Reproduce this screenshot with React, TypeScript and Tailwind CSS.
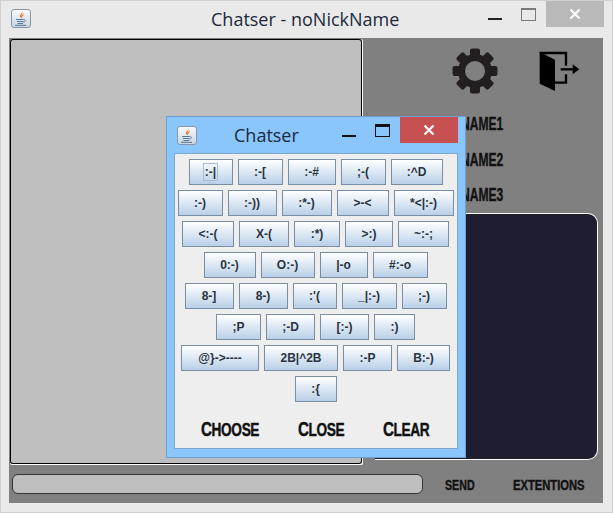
const rows = [
  [[":-|", 44], [":-[", 45], [":-#", 48], [";-(", 45], [":^D", 52]],
  [[":-)", 45], [":-))", 49], [":*-)", 50], [">-<", 52], ["*<|:-)", 60]],
  [["<:-(", 52], ["X-(", 50], [":*)", 46], [">:)", 48], ["~:-;", 51]],
  [["0:-)", 52], ["O:-)", 54], ["|-o", 48], ["#:-o", 55]],
  [["8-]", 49], ["8-)", 49], [":'(", 44], ["_|:-)", 55], [";-)", 45]],
  [[";P", 45], [";-D", 49], ["[:-)", 49], [":)", 41]],
  [["@}->----", 78], ["2B|^2B", 74], [":-P", 49], ["B:-)", 53]],
  [[":{", 42]],
] as [string, number][][];

const display = "font-['Liberation_Sans',sans-serif] font-bold uppercase text-[#111] [-webkit-text-stroke:0.4px_#111]";

function JavaIcon() {
  return (
    <svg width="20" height="19" viewBox="0 0 20 19" className="shrink-0">
      <defs>
        <linearGradient id="javaBg" x1="0" y1="0" x2="0" y2="1">
          <stop offset="0" stopColor="#fbfbfb" />
          <stop offset="1" stopColor="#c8d4e0" />
        </linearGradient>
      </defs>
      <rect x="0.5" y="0.5" width="19" height="18" rx="2.5" fill="url(#javaBg)" stroke="#8496a8" />
      <path d="M11.500 1.800c1 2.400-3.700 3.600-2.300 6.300.3.600.8 1 1.300 1.500-.6-1.600 3.500-2.900 1.600-5.300.2 1.200-1.100 1.700-1.500 2.600-.6-1.500 1.900-2.800.9-5.100z" fill="#e5762a" />
      <path d="M5 10.500h7.500M6 12.500h6.500M6.500 14.500h5.500" stroke="#557799" strokeWidth="1.100" fill="none" />
      <path d="M12.500 10.500c2.500-.5 2.500 2.500 0 2.800" stroke="#557799" strokeWidth="0.900" fill="none" />
      <path d="M4 16.300h11" stroke="#557799" strokeWidth="1" />
    </svg>
  );
}

function GearIcon() {
  return (
    <svg width="46" height="46" viewBox="-23 -23 46 46">
      {[0, 45, 90, 135, 180, 225, 270, 315].map((angle) => (
        <rect key={angle} x="-5" y="-22.500" width="10" height="10" rx="2" fill="#231f20" transform={`rotate(${angle})`} />
      ))}
      <circle r="13.500" fill="none" stroke="#231f20" strokeWidth="7" />
    </svg>
  );
}

function DoorIcon() {
  return (
    <svg width="41" height="40" viewBox="697 152 123 120">
      <path d="M699 155L745 178V272L699 250Z" fill="#000" />
      <path d="M699 158H778V196M778 222V247H745" fill="none" stroke="#000" strokeWidth="7" />
      <path d="M762 207H800" stroke="#000" strokeWidth="7" />
      <path d="M798 192L818 207L798 222Z" fill="#000" />
    </svg>
  );
}

function EmoteButton({ label, width, focused }: { label: string; width: number; focused?: boolean }) {
  return (
    <button
      type="button"
      style={{ width }}
      className="flex h-[26px] shrink-0 items-center justify-center border border-[#7a8ea3] bg-gradient-to-b from-white to-[#b9d0e8] font-['Liberation_Sans',sans-serif] text-[12px] font-bold text-[#2a3340]"
    >
      <span className={focused ? "flex h-[18px] items-center border border-[#a9bdd2] px-px" : ""}>{label}</span>
    </button>
  );
}

function BigFirst({ first, rest }: { first: string; rest: string }) {
  return (
    <span className="inline-block origin-left scale-x-[0.76] tracking-[-0.5px]">
      <span className="text-[20px]">{first}</span>
      <span className="text-[18px]">{rest}</span>
    </span>
  );
}

function EmoteDialog() {
  return (
    <div className="absolute left-[165px] top-[115px] flex h-[342px] w-[300px] flex-col border border-[#6f9fcf] bg-[#8ac5fb]">
      <div className="relative flex h-[36px] items-start">
        <div className="ml-[10px] mt-[9px]">
          <JavaIcon />
        </div>
        <span className="ml-[37px] mt-[6px] font-['Open_Sans',sans-serif] text-[18px] leading-[25px] text-[#1c2a3c]">Chatser</span>
        <div className="absolute left-[175px] top-[18px] h-[2px] w-[14px] bg-[#111]" />
        <div className="absolute left-[208px] top-[7px] h-[13px] w-[15px] border border-t-[3px] border-[#111]" />
        <div className="absolute left-[233px] top-0 flex h-[26px] w-[58px] items-center justify-center bg-[#c75050]">
          <svg width="12" height="12" viewBox="0 0 12 12">
            <path d="M1.500 1.500L10.500 10.500M10.500 1.500L1.500 10.500" stroke="#fff" strokeWidth="2.200" />
          </svg>
        </div>
      </div>
      <div className="ml-[7px] flex h-[296px] w-[284px] flex-col gap-[5px] border border-[#7ea5cb] bg-[#eeeeee] pr-px pt-[5px]">
        {rows.map((row, i) => (
          <div key={i} className="flex justify-center gap-[5px]">
            {row.map(([label, width], j) => (
              <EmoteButton key={label} label={label} width={width} focused={i === 0 && j === 0} />
            ))}
          </div>
        ))}
        <div className={`mt-[10px] flex pl-[26px] leading-[24px] ${display}`}>
          <span className="w-[97px]">
            <BigFirst first="C" rest="hoose" />
          </span>
          <span className="w-[85px]">
            <BigFirst first="C" rest="lose" />
          </span>
          <BigFirst first="C" rest="lear" />
        </div>
      </div>
    </div>
  );
}

export default function App() {
  return (
    <div className="relative h-[513px] w-[613px] overflow-hidden border border-[#d0d0d0] bg-[#e9e9e9]">
      <div className="relative flex h-[37px] items-start">
        <div className="ml-[10px] mt-[8px]">
          <JavaIcon />
        </div>
        <span className="ml-[180px] mt-[6px] font-['Open_Sans',sans-serif] text-[18px] leading-[25px] text-[#1c2a3c]">Chatser - noNickName</span>
        <div className="absolute left-[487px] top-[17px] h-[2px] w-[14px] bg-[#222]" />
        <div className="absolute left-[520px] top-[7px] h-[13px] w-[15px] border border-t-2 border-[#7a7a7a]" />
        <div className="absolute left-[545px] top-0 flex h-[26px] w-[58px] items-center justify-center bg-[#b9b9b9]">
          <svg width="12" height="12" viewBox="0 0 12 12">
            <path d="M1.500 1.500L10.500 10.500M10.500 1.500L1.500 10.500" stroke="#fff" strokeWidth="2.200" />
          </svg>
        </div>
      </div>

      <div className="ml-[8px] flex h-[465px] w-[594px] flex-col bg-[#808080]">
        <div className="flex h-[427px]">
          <div className="ml-px mt-px h-[426px] w-[353px] shrink-0 rounded-[2px] border-b border-r border-white">
            <div className="h-full w-full rounded-[3px] border border-black bg-[#bebebe]" />
          </div>
          <div className="ml-[12px] flex w-[223px] flex-col">
            <div className="flex h-[56px] items-end pl-[77px]">
              <GearIcon />
              <div className="mb-[3px] ml-[41px]">
                <DoorIcon />
              </div>
            </div>
            <div className={`flex flex-col pl-[86px] pt-[20px] text-[18px] leading-[20px] ${display}`}>
              <span className="inline-block h-[36px] origin-left scale-x-[0.67]">Name1</span>
              <span className="inline-block h-[35px] origin-left scale-x-[0.67]">Name2</span>
              <span className="inline-block h-[28px] origin-left scale-x-[0.67]">Name3</span>
            </div>
            <div className="h-[247px] rounded-r-[10px] border border-l-0 border-white bg-[#1e1e30]" />
          </div>
        </div>
        <div className="flex items-start pt-[9px]">
          <div className="ml-[3px] h-[20px] w-[411px] rounded-[6px] border border-[#333] bg-[#bebebe]" />
          <span className={`ml-[22px] mt-px w-[68px] origin-left scale-x-[0.76] text-[14px] leading-[20px] ${display}`}>Send</span>
          <span className={`mt-px origin-left scale-x-[0.8] text-[14px] leading-[20px] ${display}`}>Extentions</span>
        </div>
      </div>

      <EmoteDialog />
    </div>
  );
}
